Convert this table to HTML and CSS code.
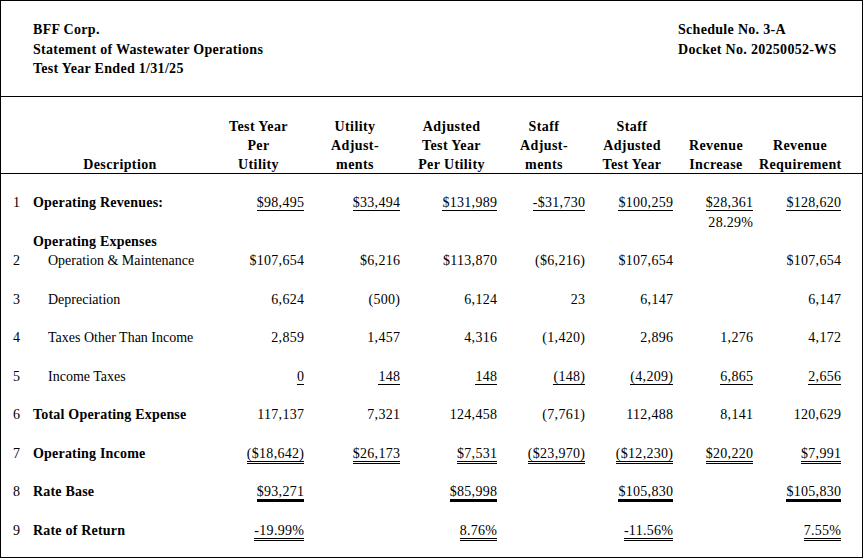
FILE: index.html
```html
<!DOCTYPE html>
<html lang="en">
<head>
<meta charset="utf-8">
<title>Schedule No. 3-A</title>
<link rel="stylesheet" href="styles.css">
</head>
<body>
<div class="sheet">
  <header class="top">
    <div class="title">
      <div>BFF Corp.</div>
      <div>Statement of Wastewater Operations</div>
      <div>Test Year Ended 1/31/25</div>
    </div>
    <div class="title">
      <div>Schedule No. 3-A</div>
      <div>Docket No. 20250052-WS</div>
    </div>
  </header>

  <div class="cols colhead">
    <div></div>
    <div class="h">Description</div>
    <div class="h">Test Year<br>Per<br>Utility</div>
    <div class="h">Utility<br>Adjust-<br>ments</div>
    <div class="h">Adjusted<br>Test Year<br>Per Utility</div>
    <div class="h">Staff<br>Adjust-<br>ments</div>
    <div class="h">Staff<br>Adjusted<br>Test Year</div>
    <div class="h">Revenue<br>Increase</div>
    <div class="h">Revenue<br>Requirement</div>
  </div>

  <div class="cols row">
    <div class="n">1</div>
    <div class="d b">Operating Revenues:</div>
    <div class="v"><span class="u1">$98,495</span></div>
    <div class="v"><span class="u1">$33,494</span></div>
    <div class="v"><span class="u1">$131,989</span></div>
    <div class="v"><span class="u1">-$31,730</span></div>
    <div class="v"><span class="u1">$100,259</span></div>
    <div class="v"><span class="u1">$28,361</span><br>28.29%</div>
    <div class="v"><span class="u1">$128,620</span></div>
  </div>

  <div class="cols row tight">
    <div class="n"></div>
    <div class="d b">Operating Expenses</div>
  </div>

  <div class="cols row tight">
    <div class="n">2</div>
    <div class="d ind">Operation &amp; Maintenance</div>
    <div class="v">$107,654</div>
    <div class="v">$6,216</div>
    <div class="v">$113,870</div>
    <div class="v">($6,216)</div>
    <div class="v">$107,654</div>
    <div class="v"></div>
    <div class="v">$107,654</div>
  </div>

  <div class="cols row">
    <div class="n">3</div>
    <div class="d ind">Depreciation</div>
    <div class="v">6,624</div>
    <div class="v">(500)</div>
    <div class="v">6,124</div>
    <div class="v">23</div>
    <div class="v">6,147</div>
    <div class="v"></div>
    <div class="v">6,147</div>
  </div>

  <div class="cols row">
    <div class="n">4</div>
    <div class="d ind">Taxes Other Than Income</div>
    <div class="v">2,859</div>
    <div class="v">1,457</div>
    <div class="v">4,316</div>
    <div class="v">(1,420)</div>
    <div class="v">2,896</div>
    <div class="v">1,276</div>
    <div class="v">4,172</div>
  </div>

  <div class="cols row">
    <div class="n">5</div>
    <div class="d ind">Income Taxes</div>
    <div class="v"><span class="u1">0</span></div>
    <div class="v"><span class="u1">148</span></div>
    <div class="v"><span class="u1">148</span></div>
    <div class="v"><span class="u1">(148)</span></div>
    <div class="v"><span class="u1">(4,209)</span></div>
    <div class="v"><span class="u1">6,865</span></div>
    <div class="v"><span class="u1">2,656</span></div>
  </div>

  <div class="cols row">
    <div class="n">6</div>
    <div class="d b">Total Operating Expense</div>
    <div class="v">117,137</div>
    <div class="v">7,321</div>
    <div class="v">124,458</div>
    <div class="v">(7,761)</div>
    <div class="v">112,488</div>
    <div class="v">8,141</div>
    <div class="v">120,629</div>
  </div>

  <div class="cols row">
    <div class="n">7</div>
    <div class="d b">Operating Income</div>
    <div class="v"><span class="u2">($18,642)</span></div>
    <div class="v"><span class="u2">$26,173</span></div>
    <div class="v"><span class="u2">$7,531</span></div>
    <div class="v"><span class="u2">($23,970)</span></div>
    <div class="v"><span class="u2">($12,230)</span></div>
    <div class="v"><span class="u2">$20,220</span></div>
    <div class="v"><span class="u2">$7,991</span></div>
  </div>

  <div class="cols row">
    <div class="n">8</div>
    <div class="d b">Rate Base</div>
    <div class="v"><span class="u3">$93,271</span></div>
    <div class="v"></div>
    <div class="v"><span class="u3">$85,998</span></div>
    <div class="v"></div>
    <div class="v"><span class="u3">$105,830</span></div>
    <div class="v"></div>
    <div class="v"><span class="u3">$105,830</span></div>
  </div>

  <div class="cols row">
    <div class="n">9</div>
    <div class="d b">Rate of Return</div>
    <div class="v"><span class="u2">-19.99%</span></div>
    <div class="v"></div>
    <div class="v"><span class="u2">8.76%</span></div>
    <div class="v"></div>
    <div class="v"><span class="u2">-11.56%</span></div>
    <div class="v"></div>
    <div class="v"><span class="u2">7.55%</span></div>
  </div>
</div>
</body>
</html>
```

FILE: styles.css
```css
html, body {
  margin: 0;
  padding: 0;
  background: #fff;
}

.sheet {
  box-sizing: border-box;
  width: 863px;
  height: 558px;
  border: 1px solid #000;
  background: #fff;
  color: #000;
  font-family: "Liberation Serif", "Times New Roman", serif;
  font-size: 14px;
  line-height: 19.25px;
}

.top {
  box-sizing: border-box;
  height: 96px;
  padding: 19.35px 0 0 32px;
  border-bottom: 1px solid #000;
  display: grid;
  grid-template-columns: 645px 1fr;
  font-weight: bold;
  letter-spacing: 0.3px;
}

.cols {
  display: grid;
  grid-template-columns: 26px 174px 91px 90px 91px 82px 82px 74px 82px;
  column-gap: 6px;
}

.colhead {
  box-sizing: border-box;
  height: 77px;
  padding-top: 19.5px;
  border-bottom: 1px solid #000;
  align-items: end;
  text-align: center;
  font-weight: bold;
  letter-spacing: 0.4px;
}

.row {
  padding-top: 19.25px;
  align-items: start;
}

.row.tight {
  padding-top: 0;
}

.n {
  padding-left: 12px;
}

.b {
  font-weight: bold;
  letter-spacing: 0.2px;
}

.ind {
  padding-left: 15px;
}

.v {
  text-align: right;
  letter-spacing: 0.3px;
  margin-right: -0.3px;
}

.u1,
.u2,
.u3 {
  display: inline-block;
  line-height: 14px;
}

.u1 {
  border-bottom: 1px solid #000;
  margin-bottom: -1px;
}

.u2 {
  border-bottom: 3px double #000;
  margin-bottom: -3px;
}

.u3 {
  border-bottom: 3px solid #000;
  margin-bottom: -3px;
}
```
